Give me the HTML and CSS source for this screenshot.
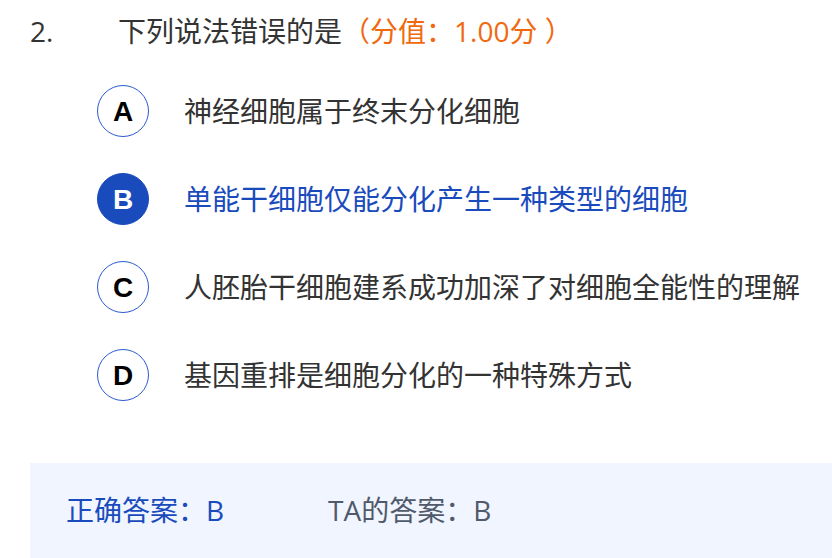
FILE: index.html
```html
<!DOCTYPE html>
<html lang="zh-CN">
<head>
<meta charset="utf-8">
<title>题目</title>
<link rel="stylesheet" href="styles.css">
</head>
<body>
<div class="question">
  <div class="title">
    <span class="num">2.</span>
    <span class="stem">下列说法错误的是<span class="score">（分值：1.00分 ）</span></span>
  </div>
  <ul class="options">
    <li class="option"><span class="badge">A</span><span class="text">神经细胞属于终末分化细胞</span></li>
    <li class="option selected"><span class="badge">B</span><span class="text">单能干细胞仅能分化产生一种类型的细胞</span></li>
    <li class="option"><span class="badge">C</span><span class="text">人胚胎干细胞建系成功加深了对细胞全能性的理解</span></li>
    <li class="option"><span class="badge">D</span><span class="text">基因重排是细胞分化的一种特殊方式</span></li>
  </ul>
  <div class="answer">
    <span class="correct">正确答案：B</span>
    <span class="mine">TA的答案：B</span>
  </div>
</div>
</body>
</html>
```
FILE: styles.css
```css
* { box-sizing: border-box; }
html, body {
  margin: 0;
  padding: 0;
  background: #ffffff;
}
body {
  font-family: "Open Sans", "Noto Sans CJK SC", sans-serif;
  font-size: 28px;
  color: #333333;
}
.question {
  padding-left: 30px;
  padding-top: 10px;
}
.title {
  display: flex;
  align-items: center;
  height: 42px;
  line-height: 42px;
}
.num {
  width: 88px;
  color: #333333;
}
.stem { color: #333333; }
.score { color: #f0690f; }
.options {
  list-style: none;
  margin: 33px 0 0 0;
  padding: 0 0 0 67px;
  display: flex;
  flex-direction: column;
  gap: 36px;
}
.option {
  display: flex;
  align-items: center;
  gap: 35px;
  height: 52px;
}
.badge {
  width: 52px;
  height: 52px;
  flex: none;
  border-radius: 50%;
  border: 1.5px solid #2a5bd0;
  display: flex;
  align-items: center;
  justify-content: center;
  font-family: "Liberation Sans", Arial, sans-serif;
  font-weight: 700;
  font-size: 28px;
  line-height: 1;
  padding-top: 2px;
  color: #000000;
}
.text {
  color: #333333;
  line-height: 40px;
}
.selected .badge {
  background: #1a4bbd;
  border-color: #1a4bbd;
  color: #ffffff;
}
.selected .text { color: #1a4bbd; }
.answer {
  margin-top: 62px;
  background: #f0f5ff;
  height: 100px;
  display: flex;
  align-items: center;
  padding-left: 36px;
  padding-bottom: 8px;
}
.correct {
  color: #1a4bbd;
  width: 262px;
}
.mine { color: #505a6b; }
```
